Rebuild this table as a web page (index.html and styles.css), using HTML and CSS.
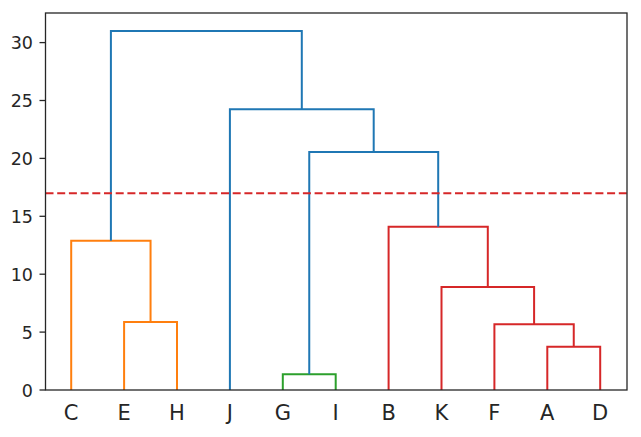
FILE: index.html
```html
<!DOCTYPE html>
<html lang="en">
<head>
<meta charset="utf-8">
<title>Dendrogram</title>
<link rel="stylesheet" href="styles.css">
</head>
<body>
<div class="figure">
<svg class="chart" width="641" height="437" viewBox="0 0 641 437" xmlns="http://www.w3.org/2000/svg">
  <g class="links">
    <path class="c-orange" d="M124.1 390 V322 H177 V390"/>
    <path class="c-orange" d="M71.2 390 V240.7 H150.55 V322"/>
    <path class="c-green" d="M282.8 390 V374.3 H335.7 V390"/>
    <path class="c-red" d="M547.3 390 V346.7 H600.2 V390"/>
    <path class="c-red" d="M494.4 390 V324.3 H573.75 V346.7"/>
    <path class="c-red" d="M441.5 390 V287 H534.1 V324.3"/>
    <path class="c-red" d="M388.6 390 V226.7 H487.8 V287"/>
    <path class="c-blue" d="M309.25 374.3 V152 H438.2 V226.7"/>
    <path class="c-blue" d="M229.9 390 V109.3 H373.7 V152"/>
    <path class="c-blue" d="M110.9 240.7 V31 H301.8 V109.3"/>
  </g>
  <line class="cut" x1="45.5" y1="193.2" x2="627" y2="193.2"/>
  <rect class="frame" x="45.5" y="13" width="581.5" height="377"/>
  <g class="yticks">
    <line x1="39.5" y1="390" x2="45.5" y2="390"/>
    <line x1="39.5" y1="332.1" x2="45.5" y2="332.1"/>
    <line x1="39.5" y1="274.2" x2="45.5" y2="274.2"/>
    <line x1="39.5" y1="216.3" x2="45.5" y2="216.3"/>
    <line x1="39.5" y1="158.4" x2="45.5" y2="158.4"/>
    <line x1="39.5" y1="100.5" x2="45.5" y2="100.5"/>
    <line x1="39.5" y1="42.6" x2="45.5" y2="42.6"/>
  </g>
  <g class="ylabels">
    <text x="33" y="396.6">0</text>
    <text x="33" y="338.7">5</text>
    <text x="33" y="280.8">10</text>
    <text x="33" y="222.9">15</text>
    <text x="33" y="165">20</text>
    <text x="33" y="107.1">25</text>
    <text x="33" y="49.2">30</text>
  </g>
  <g class="xlabels">
    <text x="71.2" y="419.5">C</text>
    <text x="124.1" y="419.5">E</text>
    <text x="177" y="419.5">H</text>
    <text x="229.9" y="419.5">J</text>
    <text x="282.8" y="419.5">G</text>
    <text x="335.7" y="419.5">I</text>
    <text x="388.6" y="419.5">B</text>
    <text x="441.5" y="419.5">K</text>
    <text x="494.4" y="419.5">F</text>
    <text x="547.3" y="419.5">A</text>
    <text x="600.2" y="419.5">D</text>
  </g>
</svg>
</div>
</body>
</html>
```

FILE: styles.css
```css
html, body {
  margin: 0;
  padding: 0;
  background: #ffffff;
}

.figure {
  width: 641px;
  height: 437px;
  overflow: hidden;
}

.chart {
  display: block;
}

.links path {
  fill: none;
  stroke-width: 2;
  stroke-linejoin: miter;
  stroke-linecap: butt;
}

.c-blue { stroke: #1f77b4; }
.c-orange { stroke: #ff7f0e; }
.c-green { stroke: #2ca02c; }
.c-red { stroke: #d62728; }

.cut {
  stroke: #d62728;
  stroke-width: 2;
  stroke-dasharray: 8 3.7;
}

.frame {
  fill: none;
  stroke: #262626;
  stroke-width: 1.3;
}

.yticks line {
  stroke: #262626;
  stroke-width: 1.3;
}

.ylabels text {
  font-family: "DejaVu Sans", sans-serif;
  font-size: 17.5px;
  fill: #262626;
  text-anchor: end;
}

.xlabels text {
  font-family: "DejaVu Sans", sans-serif;
  font-size: 21px;
  fill: #262626;
  text-anchor: middle;
}
```
